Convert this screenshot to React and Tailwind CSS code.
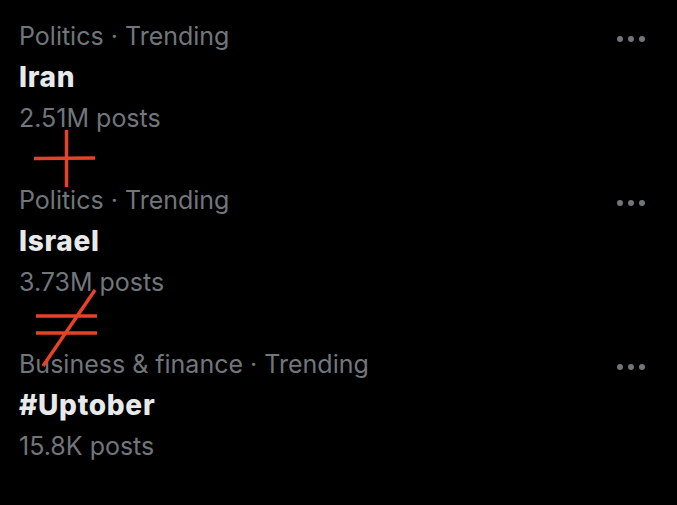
import React from "react";

const trends = [
  { cat: "Politics · Trending", title: "Iran", posts: "2.51M posts" },
  { cat: "Politics · Trending", title: "Israel", posts: "3.73M posts" },
  { cat: "Business & finance · Trending", title: "#Uptober", posts: "15.8K posts" },
];

function Dots() {
  return (
    <div className="flex items-center gap-[5px] h-[41px] pt-[4px]">
      <span className="block w-[6px] h-[6px] rounded-full bg-[#71767b]" />
      <span className="block w-[6px] h-[6px] rounded-full bg-[#71767b]" />
      <span className="block w-[6px] h-[6px] rounded-full bg-[#71767b]" />
    </div>
  );
}

export default function App() {
  return (
    <div
      className="relative w-[677px] h-[505px] bg-black overflow-hidden"
      style={{ fontFamily: "Inter, 'Noto Sans', sans-serif" }}
    >
      <div className="flex flex-col">
        {trends.map((t, i) => (
          <div key={i} className="flex justify-between pl-[19px] pr-[32px] pt-[16px] pb-[25px]">
            <div className="flex flex-col">
              <div className="text-[25px] leading-[41px] text-[#71767b]">{t.cat}</div>
              <div className="text-[28px] leading-[41px] font-extrabold tracking-[0.7px] text-[#e7e9ea]">{t.title}</div>
              <div className="text-[25px] leading-[41px] text-[#71767b]">{t.posts}</div>
            </div>
            <Dots />
          </div>
        ))}
      </div>
      <svg
        className="absolute inset-0 pointer-events-none"
        width="677"
        height="505"
        viewBox="0 0 677 505"
      >
        <g stroke="#e8412b" strokeWidth="3.5" strokeLinecap="butt" fill="none">
          <line x1="34" y1="158.5" x2="95" y2="158" />
          <line x1="66.5" y1="130" x2="66.5" y2="187" />
          <line x1="36" y1="316" x2="97" y2="316" />
          <line x1="36" y1="333" x2="97" y2="333" />
          <line x1="95" y1="290" x2="43" y2="366" />
        </g>
      </svg>
    </div>
  );
}
